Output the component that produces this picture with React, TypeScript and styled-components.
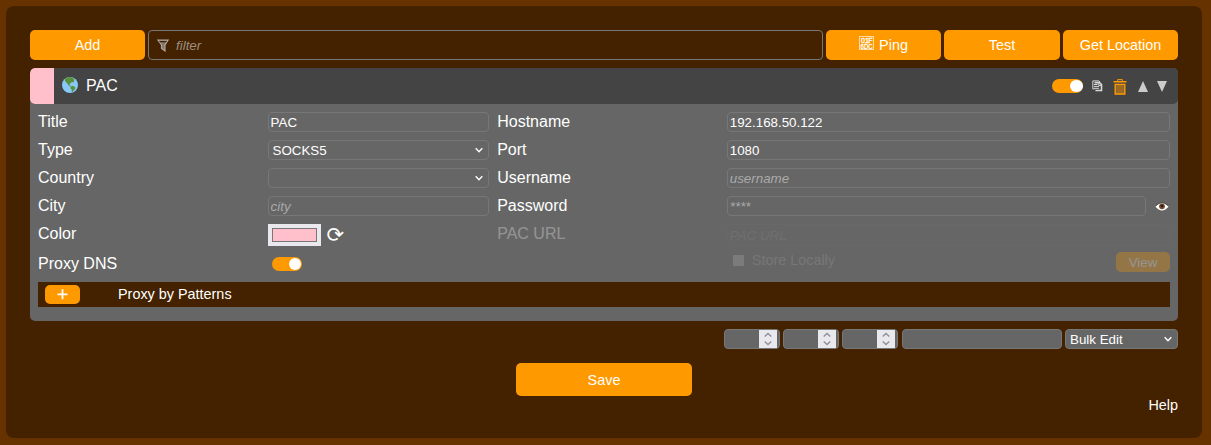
import React from 'react';
import styled, { createGlobalStyle } from 'styled-components';

const Global = createGlobalStyle`
  *, *::before, *::after { box-sizing: border-box; }
  body {
    margin: 0;
    background: #630;
    color: #fff;
    font: 16px/20px "Liberation Sans", Arial, sans-serif;
  }
  svg { display: block; flex: none; }
`;

const Page = styled.div`
  height: 445px;
  padding: 6px 9px 7px 6px;
`;

const Article = styled.main`
  height: 432px;
  padding: 24px;
  border-radius: 8px;
  background: #420;
`;

const Toolbar = styled.div`
  display: flex;
  gap: 3px;
  height: 30px;
  margin-bottom: 8px;
`;

const Button = styled.button<{ $width?: number }>`
  display: flex;
  align-items: center;
  justify-content: center;
  flex: none;
  width: ${(p) => p.$width ?? 115}px;
  height: 100%;
  padding: 0;
  border: 0;
  border-radius: 5px;
  background: #f90;
  color: #fff;
  font: 14.4px/18px "Liberation Sans", Arial, sans-serif;
`;

const FilterBox = styled.label`
  display: flex;
  align-items: center;
  flex: 1;
  gap: 7px;
  padding-left: 8px;
  border: 1px solid #777;
  border-radius: 4px;
`;

const FilterInput = styled.input`
  flex: 1;
  padding: 2px 0 0;
  border: 0;
  background: none;
  outline: 0;
  color: #fff;
  font: 13.333px/16px "Liberation Sans", Arial, sans-serif;
  &::placeholder { color: #9d8e80; font-style: italic; }
`;

const Card = styled.section`
  height: 253px;
  border-radius: 5px;
  background: #666;
  overflow: hidden;
`;

const CardHeader = styled.header`
  display: flex;
  align-items: center;
  height: 36px;
  padding-right: 11px;
  border-radius: 5px;
  background: #444;
  overflow: hidden;
`;

const Swatch = styled.span`
  width: 24px;
  height: 36px;
  margin-right: 8px;
  background: pink;
`;

const CardTitle = styled.span`
  flex: 1;
  margin-left: 8px;
`;

const Toggle = styled.span<{ $width: number }>`
  display: flex;
  justify-content: flex-end;
  align-items: center;
  width: ${(p) => p.$width}px;
  height: 14px;
  padding-right: 0.5px;
  border-radius: 7px;
  background: #f90;
  &::after {
    content: "";
    width: 12.5px;
    height: 12.5px;
    border-radius: 50%;
    background: #fff;
  }
`;

const HeaderIcons = styled.div`
  display: flex;
  align-items: center;
`;

const Gap = styled.span<{ $w: number }>`
  width: ${(p) => p.$w}px;
`;

const Grid = styled.div`
  display: grid;
  grid-template-columns: 1fr 1fr 1fr 2fr;
  grid-template-rows: repeat(4, 20px) 22px 20px;
  gap: 8px;
  padding: 8px 8px 0;
`;

const Label = styled.label<{ $dim?: boolean }>`
  height: 20px;
  opacity: ${(p) => (p.$dim ? 0.3 : 1)};
`;

const Field = styled.input`
  width: 100%;
  min-width: 0;
  height: 20px;
  padding: 1px 2px 0;
  border: 1px solid #777;
  border-radius: 4px;
  background: #666;
  color: #fff;
  outline: 0;
  font: 13.333px/16px "Liberation Sans", Arial, sans-serif;
  &::placeholder { color: #aaa; font-style: italic; opacity: 1; }
`;

const SelectWrap = styled.div<{ $width?: string }>`
  display: grid;
  align-items: center;
  width: ${(p) => p.$width ?? '100%'};
  height: 20px;
  > * { grid-area: 1 / 1; }
  > svg { justify-self: end; margin-right: 5px; pointer-events: none; }
`;

const NativeSelect = styled.select`
  appearance: none;
  width: 100%;
  height: 20px;
  padding: 1px 4px 0;
  border: 1px solid #777;
  border-radius: 4px;
  background: #666;
  color: #fff;
  font: 13.333px/16px "Liberation Sans", Arial, sans-serif;
`;

const PasswordRow = styled.div`
  display: flex;
  align-items: center;
  gap: 9px;
  padding-right: 1px;
`;

const ColorRow = styled.div`
  display: flex;
  align-items: center;
  gap: 6px;
`;

const ColorInput = styled.span`
  width: 53px;
  height: 22px;
  padding: 4px;
  background: #e9e9ed;
  &::after {
    content: "";
    display: block;
    height: 14px;
    border: 1px solid #777;
    background: pink;
  }
`;

const Reload = styled.span`
  font: 21px/22px "DejaVu Sans", sans-serif;
`;

const DimField = styled(Field)`
  height: 22px;
  padding-top: 0;
  opacity: 0.14;
`;

const StoreRow = styled.div`
  display: flex;
  align-items: flex-start;
  justify-content: space-between;
  margin-top: -3px;
`;

const StoreLabel = styled.label`
  display: flex;
  align-items: center;
  gap: 8px;
  height: 18px;
  padding-left: 6px;
  color: #777;
  font-size: 14.4px;
`;

const Check = styled.span`
  width: 11px;
  height: 11px;
  background: #7b7b7b;
`;

const ViewButton = styled(Button)`
  height: 20px;
  margin-top: 1px;
  padding-top: 1px;
  font-size: 13.333px;
  opacity: 0.3;
`;

const DnsCell = styled.div`
  padding: 3px 0 0 4px;
`;

const PatternBar = styled.div`
  display: flex;
  align-items: center;
  height: 25px;
  margin: 8px 8px 0;
  padding-left: 7px;
  background: #420;
`;

const PatternTitle = styled.span`
  height: 20px;
  font-size: 14.4px;
  line-height: 18px;
`;

const PlusButton = styled(Button)`
  height: 19px;
  margin-right: 38px;
`;

const BulkRow = styled.div`
  display: flex;
  justify-content: flex-end;
  gap: 3px;
  margin-top: 8px;
`;

const NumberBox = styled.div`
  display: flex;
  justify-content: flex-end;
  width: 56px;
  height: 20px;
  padding-right: 2px;
  border: 1px solid #777;
  border-radius: 4px;
  background: #666;
`;

const Spinner = styled.span`
  display: grid;
  place-items: center;
  width: 18px;
  background: #e9e9ed;
`;

const BulkText = styled(Field)`
  width: 160px;
  margin-left: 1px;
`;

const SaveRow = styled.div`
  display: flex;
  justify-content: center;
  height: 33px;
  margin-top: 14px;
`;

const HelpRow = styled.div`
  height: 18px;
  text-align: right;
  font-size: 14.4px;
  line-height: 18px;
`;

const GlyphSlot = styled.span`
  height: 18px;
  margin-right: 5px;
`;

const GlobeSlot = styled.span`
  height: 18px;
`;

const TrashSlot = styled.span`
  padding-top: 2px;
`;

const TriangleSlot = styled.span`
  padding-top: 1px;
`;

const Chevron = () => (
  <svg width="10" height="10" viewBox="0 0 10 10" fill="none" stroke="#fff" strokeWidth="1.4">
    <path d="M1.7 3.3 5 6.8 8.3 3.3" />
  </svg>
);

const FunnelIcon = () => (
  <svg width="12" height="13" viewBox="0 0 12 13">
    <path d="M.8 1h10.4L8 6v6L4.5 9.5V6z" fill="#857669" stroke="#b4aaa2" strokeWidth="1.1" />
    <path d="M2 1.9h8L9 3.3H3z" fill="#420" />
  </svg>
);

const Globe = () => (
  <svg width="16" height="16" viewBox="0 0 16 16">
    <circle cx="8" cy="8" r="8" fill="#88c9f9" />
    <path d="M2.8 2.2C4.5.8 6 .1 8.6.1l2.5.9 1.4 1.3-.8.7.7.8-1.1 1.6-1.5-.3-1.3 1.4-.9.6.2 1.2 1 .6-.5.5-1.7-.8-.9-1.6-1.4-1.5L3 3.9z" fill="#5c913b" />
    <path d="M8.5 9.6 10.2 8.8l2 .6 1.2 1.2-.5 1.7-1.4 1.2-.8 1.6-.9-.4-.2-2.3-1.1-1.2z" fill="#5c913b" />
  </svg>
);

const MissingGlyph = () => (
  <svg width="15" height="15" viewBox="0 0 15 15">
    <rect x=".5" y=".5" width="14" height="13" fill="none" stroke="#fff" strokeOpacity=".65" />
    <g fill="#fff" fontFamily="Liberation Sans" fontSize="7" fontWeight="400" stroke="#fff" strokeWidth=".3">
      <text x="2" y="6.7">0</text>
      <text x="6" y="6.7">1</text>
      <text x="9.3" y="6.7">F</text>
      <text x="1.6" y="12.8" textLength="12" lengthAdjust="spacingAndGlyphs">6DC</text>
    </g>
  </svg>
);

const CopyIcon = () => (
  <svg width="11" height="12" viewBox="0 0 11 12" fill="none" stroke="#d8d8d8">
    <path d="M.8.9h6L8 2M.8.9v8h1.7" />
    <path d="M2.6 2.6h4.9l2 2v5.9H3.4" strokeWidth="1.6" />
    <path d="M2 4.5h3.5M2 6.4h5M2 8.3h5M6.8 3v2.6h2.4" strokeWidth="1" />
  </svg>
);

const TrashIcon = () => (
  <svg width="14" height="16" viewBox="0 0 14 16">
    <path d="M4.7 2V.6h4.6V2" fill="none" stroke="#f90" />
    <path d="M.5 2h13v1.6H.5z" fill="#f90" />
    <path d="M2.2 5.4h9.6v9.6H2.2z" fill="#8f6526" stroke="#f90" strokeWidth="1.4" />
    <path d="M5 6v8M7 6v8M9 6v8" stroke="#b87b1b" strokeWidth=".7" />
  </svg>
);

const Triangle = ({ down }: { down?: boolean }) => (
  <svg width="10" height="11" viewBox="0 0 10 11">
    <path d={down ? 'M0 0h10L5 11z' : 'M5 0l5 11H0z'} fill="#ccc" />
  </svg>
);

const EyeIcon = () => (
  <svg width="14" height="9" viewBox="0 0 14 9">
    <path d="M.5 4.8Q3.5.9 7 .9t6.5 3.9Q10.5 8.5 7 8.5T.5 4.8z" fill="#fff" />
    <path d="M1 3.6Q3.8.7 7 .7t6 2.9" fill="none" stroke="#444" strokeWidth=".8" />
    <circle cx="7" cy="4.3" r="2.9" fill="#7b4a2d" />
    <circle cx="7" cy="4" r="1.4" fill="#222" />
  </svg>
);

const SpinArrows = () => (
  <svg width="10" height="14" viewBox="0 0 10 14" fill="none" stroke="#8f8f9d" strokeWidth="1.4">
    <path d="M1.7 4.6 5 1.5l3.3 3.1M1.7 9.4 5 12.5l3.3-3.1" />
  </svg>
);

const PlusIcon = () => (
  <svg width="11" height="11" viewBox="0 0 11 11" stroke="#fff" strokeWidth="1.8">
    <path d="M5.5.3v10M.5 5.3h10" />
  </svg>
);

const Select = ({ value, width }: { value: string; width?: string }) => (
  <SelectWrap $width={width}>
    <NativeSelect defaultValue={value}>
      <option value={value}>{value}</option>
    </NativeSelect>
    <Chevron />
  </SelectWrap>
);

export default function App() {
  return (
    <>
      <Global />
      <Page>
        <Article>
          <Toolbar>
            <Button>Add</Button>
            <FilterBox>
              <FunnelIcon />
              <FilterInput placeholder="filter" />
            </FilterBox>
            <Button>
              <GlyphSlot>
                <MissingGlyph />
              </GlyphSlot>
              Ping
            </Button>
            <Button $width={116}>Test</Button>
            <Button>Get Location</Button>
          </Toolbar>

          <Card>
            <CardHeader>
              <Swatch />
              <GlobeSlot>
                <Globe />
              </GlobeSlot>
              <CardTitle>PAC</CardTitle>
              <HeaderIcons>
                <Toggle $width={31} />
                <Gap $w={9} />
                <CopyIcon />
                <Gap $w={10} />
                <TrashSlot>
                  <TrashIcon />
                </TrashSlot>
                <Gap $w={11} />
                <TriangleSlot>
                  <Triangle />
                </TriangleSlot>
                <Gap $w={9} />
                <TriangleSlot>
                  <Triangle down />
                </TriangleSlot>
              </HeaderIcons>
            </CardHeader>

            <Grid>
              <Label>Title</Label>
              <Field defaultValue="PAC" />
              <Label>Hostname</Label>
              <Field defaultValue="192.168.50.122" />

              <Label>Type</Label>
              <Select value="SOCKS5" />
              <Label>Port</Label>
              <Field defaultValue="1080" />

              <Label>Country</Label>
              <Select value="" />
              <Label>Username</Label>
              <Field placeholder="username" />

              <Label>City</Label>
              <Field placeholder="city" />
              <Label>Password</Label>
              <PasswordRow>
                <Field placeholder="****" />
                <EyeIcon />
              </PasswordRow>

              <Label>Color</Label>
              <ColorRow>
                <ColorInput />
                <Reload>⟳</Reload>
              </ColorRow>
              <Label $dim>PAC URL</Label>
              <DimField placeholder="PAC URL" />

              <Label>Proxy DNS</Label>
              <DnsCell>
                <Toggle $width={30} />
              </DnsCell>
              <span />
              <StoreRow>
                <StoreLabel>
                  <Check />
                  Store Locally
                </StoreLabel>
                <ViewButton $width={54}>View</ViewButton>
              </StoreRow>
            </Grid>

            <PatternBar>
              <PlusButton $width={35}>
                <PlusIcon />
              </PlusButton>
              <PatternTitle>Proxy by Patterns</PatternTitle>
            </PatternBar>
          </Card>

          <BulkRow>
            {[0, 1, 2].map((i) => (
              <NumberBox key={i}>
                <Spinner>
                  <SpinArrows />
                </Spinner>
              </NumberBox>
            ))}
            <BulkText />
            <Select value="Bulk Edit" width="113px" />
          </BulkRow>

          <SaveRow>
            <Button $width={176}>Save</Button>
          </SaveRow>
          <HelpRow>Help</HelpRow>
        </Article>
      </Page>
    </>
  );
}
